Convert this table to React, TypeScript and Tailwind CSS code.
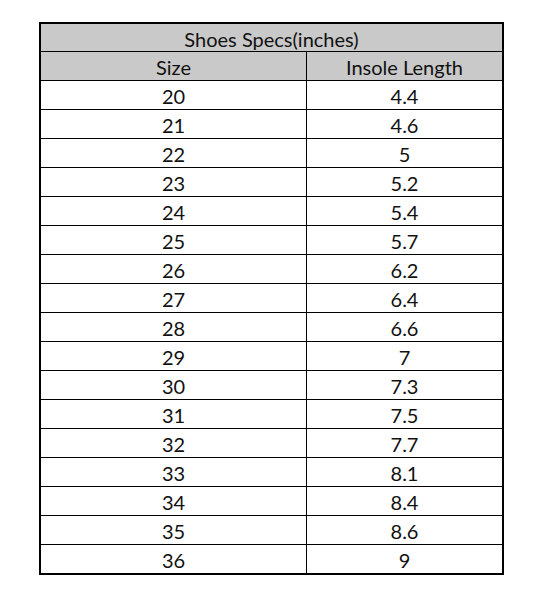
const rows: [string, string][] = [
  ["20", "4.4"],
  ["21", "4.6"],
  ["22", "5"],
  ["23", "5.2"],
  ["24", "5.4"],
  ["25", "5.7"],
  ["26", "6.2"],
  ["27", "6.4"],
  ["28", "6.6"],
  ["29", "7"],
  ["30", "7.3"],
  ["31", "7.5"],
  ["32", "7.7"],
  ["33", "8.1"],
  ["34", "8.4"],
  ["35", "8.6"],
  ["36", "9"],
];

export default function App() {
  return (
    <div className="w-[536px] h-[591px] bg-white pt-[22px] pl-[39px] font-['Lato',sans-serif] text-[20px] leading-none text-[#111]">
      <div className="w-[465px] border-2 border-black">
        <div className="h-[28px] pt-[2px] bg-[#c9c9c9] flex items-center justify-center border-b border-black">
          Shoes Specs(inches)
        </div>
        <div className="grid grid-cols-[266px_1fr] h-[29px] bg-[#c9c9c9] border-b border-black">
          <div className="flex items-center justify-center pt-[2px] border-r border-black">Size</div>
          <div className="flex items-center justify-center pt-[2px]">Insole Length</div>
        </div>
        {rows.map(([size, len], i) => (
          <div
            key={size}
            className={
              i === rows.length - 1
                ? "grid grid-cols-[266px_1fr] h-[28px]"
                : "grid grid-cols-[266px_1fr] h-[29px] border-b border-black"
            }
          >
            <div className="flex items-center justify-center pt-[2px] border-r border-black">{size}</div>
            <div className="flex items-center justify-center pt-[2px]">{len}</div>
          </div>
        ))}
      </div>
    </div>
  );
}
